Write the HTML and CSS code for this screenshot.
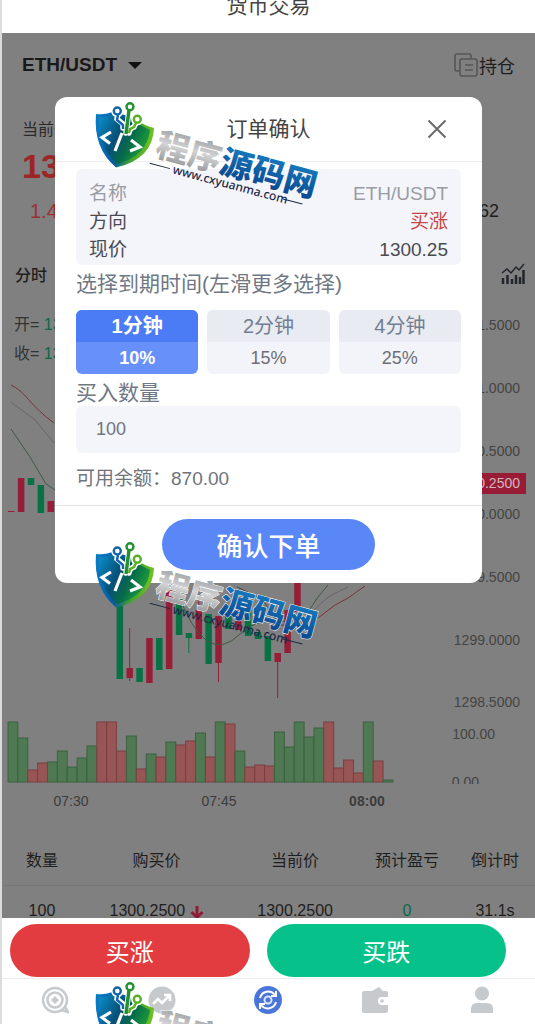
FILE: index.html
```
<!DOCTYPE html>
<html lang="zh-CN">
<head>
    <meta charset="UTF-8">
    <meta name="viewport" content="width=device-width, initial-scale=1.0">
    <title>货币交易</title>
    <link rel="stylesheet" href="styles.css">
</head>
<body>
    <div class="app">
        <header class="navbar"><h1>货币交易</h1></header>

        <main class="content">
            <div class="pair-bar">
                <button class="pair">ETH/USDT <span class="caret"></span></button>
                <a class="position" href="#">
                    <svg width="26" height="24" viewBox="0 0 26 24" fill="none" stroke="#555" stroke-width="1.6">
                        <path d="M6 18H4a2 2 0 0 1-2-2V3a2 2 0 0 1 2-2h12a2 2 0 0 1 2 2v2"/>
                        <rect x="7" y="6" width="17" height="17" rx="2"/>
                        <path d="M12 12h8M12 17h8"/>
                    </svg>持仓</a>
            </div>

            <div class="quote">
                <div class="quote-label">当前价</div>
                <div class="quote-price">1300.25</div>
                <div class="quote-row"><span class="change">1.43%</span><span>1281.62</span></div>
            </div>

            <div class="period">
                <span>分时</span>
                <svg width="24" height="22" viewBox="0 0 24 22" fill="none" stroke="#23252d">
                    <path d="M2 21v-6M6.500 21v-9M11 21v-5M15 21v-9M19 21v-7M22.500 21V7" stroke-width="2.500"/>
                    <path d="M1 10l5-4 4 4 5-6 3 3 5-6" stroke-width="1.500"/>
                </svg>
            </div>

            <svg class="chart" viewBox="2 300 533 533">
                <defs><clipPath id="volClip"><rect x="440" y="770" width="95" height="14"/></clipPath></defs>
                <g class="legend">
                    <text x="14" y="330">开= <tspan class="num">1300.1</tspan></text>
                    <text x="14" y="359">收= <tspan class="num">1300.2</tspan></text>
                </g>
                <g id="candles"></g>
                <g id="volumes"></g>
                <g class="ma">
                    <path class="ma-red" d="M11 385Q20 389 29 400T54 423M318 618L335 605L348 598L365 586"/>
                    <path class="ma-grey" d="M11 402L35 420L54 443M312 612L328 597L348 587"/>
                    <path class="ma-green" d="M11 429L30 457L46 484L55 490M308 612L318 597L328 585"/>
                    <path class="ma-green" d="M178 592Q190 628 206 640T240 634T290 622"/>
                    <path class="ma-dark" d="M237 587L262 599L280 625L300 626L310 615"/>
                </g>
                <g class="axis">
                    <text x="520" y="330">1301.5000</text>
                    <text x="520" y="393">1301.0000</text>
                    <text x="520" y="456">1300.5000</text>
                    <text x="520" y="519">1300.0000</text>
                    <text x="520" y="582">1299.5000</text>
                    <text x="520" y="645">1299.0000</text>
                    <text x="520" y="707">1298.5000</text>
                    <text x="495" y="739">100.00</text>
                    <text x="479" y="787" clip-path="url(#volClip)">0.00</text>
                </g>
                <rect class="tag" x="445" y="473" width="81" height="21"/>
                <text class="tag-text" x="520" y="488">1300.2500</text>
                <g class="times">
                    <text x="71" y="806">07:30</text>
                    <text x="219" y="806">07:45</text>
                    <text class="hour" x="367" y="806">08:00</text>
                </g>
            </svg>

            <table class="orders">
                <thead>
                    <tr><th>数量</th><th>购买价</th><th>当前价</th><th>预计盈亏</th><th>倒计时</th></tr>
                </thead>
                <tbody>
                    <tr>
                        <td>100</td>
                        <td>1300.2500 <svg class="arrow" width="14" height="14" viewBox="0 0 14 14"><path d="M7 1v11M1.500 7L7 12.500 12.500 7"/></svg></td>
                        <td>1300.2500</td>
                        <td class="profit">0</td>
                        <td>31.1s</td>
                    </tr>
                </tbody>
            </table>

            <div class="mask">
                <form class="dialog" role="dialog" aria-labelledby="dialogTitle">
                    <div class="dialog-head">
                        <h2 id="dialogTitle">订单确认</h2>
                        <button type="button" class="close" aria-label="关闭">
                            <svg width="20" height="20" viewBox="0 0 20 20"><path d="M1.500 1.500l17 17M18.500 1.500l-17 17"/></svg>
                        </button>
                    </div>
                    <div class="dialog-body">
                        <dl class="info">
                            <div class="muted"><dt>名称</dt><dd>ETH/USDT</dd></div>
                            <div><dt>方向</dt><dd class="up">买涨</dd></div>
                            <div><dt>现价</dt><dd>1300.25</dd></div>
                        </dl>
                        <div class="label">选择到期时间(左滑更多选择)</div>
                        <div class="options">
                            <button type="button" class="option active"><span>1分钟</span><span>10%</span></button>
                            <button type="button" class="option"><span>2分钟</span><span>15%</span></button>
                            <button type="button" class="option"><span>4分钟</span><span>25%</span></button>
                        </div>
                        <label class="label amount-label" for="amount">买入数量</label>
                        <input class="amount" id="amount" type="text" value="100">
                        <div class="balance">可用余额：870.00</div>
                    </div>
                    <div class="dialog-foot"><button type="button" class="submit">确认下单</button></div>
                </form>
            </div>
        </main>

        <div class="actions">
            <button class="buy-up">买涨</button>
            <button class="buy-down">买跌</button>
        </div>

        <nav class="tabbar">
            <a href="#" aria-label="首页">
                <svg width="28" height="28" viewBox="0 0 28 28" fill="none" stroke="#c6cacd" stroke-width="2.500">
                    <circle cx="14" cy="14" r="12"/><circle cx="14" cy="14" r="7.500"/>
                    <path d="M14 10l4 4-4 4-4-4z" fill="#c6cacd" stroke="none"/><path d="M19 24l8 2-3-5"/>
                </svg>
            </a>
            <a href="#" aria-label="行情">
                <svg width="28" height="28" viewBox="0 0 28 28" fill="none">
                    <circle cx="14" cy="14" r="13.500" fill="#c6cacd"/>
                    <path d="M5 18l5-5 4 4 7-7M16 9h6v6" stroke="#fff" stroke-width="2.500"/>
                </svg>
            </a>
            <a href="#" aria-label="交易">
                <svg width="28" height="28" viewBox="0 0 28 28" fill="none">
                    <circle cx="14" cy="14" r="14" fill="#4a76dc"/>
                    <path d="M6 12a8.500 8.500 0 0 1 15-3M22 16a8.500 8.500 0 0 1-15 3M22 5v5h-5M6 23v-5h5" stroke="#fff" stroke-width="2"/>
                    <circle cx="14" cy="14" r="3.500" stroke="#dce6ff" stroke-width="2"/>
                </svg>
            </a>
            <a href="#" aria-label="资产">
                <svg width="28" height="28" viewBox="0 0 28 28">
                    <path d="M1 7q0-2 2-2h8l7-4 4 4h3q2 0 2 2v4h-6a4 4 0 0 0 0 8h6v6q0 2-2 2H3q-2 0-2-2z" fill="#c6cacd"/>
                    <circle cx="21" cy="15" r="1.800" fill="#c6cacd"/>
                </svg>
            </a>
            <a href="#" aria-label="我的">
                <svg width="28" height="28" viewBox="0 0 28 28" fill="#c6cacd">
                    <circle cx="14" cy="7.500" r="7"/><path d="M3 27v-4q0-6 6-6h10q6 0 6 6v4z"/>
                </svg>
            </a>
        </nav>

        <svg class="watermark first" viewBox="0 0 235 112">
            <defs>
                <linearGradient id="edge" x1="0" y1=".4" x2="1" y2=".6"><stop offset="0" stop-color="#0878c0"/><stop offset=".4" stop-color="#0758a5"/><stop offset=".65" stop-color="#3aa02f"/><stop offset="1" stop-color="#7cc522"/></linearGradient>
                <linearGradient id="face" x1="0" y1="0" x2="1" y2=".5"><stop offset="0" stop-color="#0890cc"/><stop offset=".45" stop-color="#075078"/><stop offset=".7" stop-color="#066a4a"/><stop offset="1" stop-color="#1d9e38"/></linearGradient>
                <linearGradient id="silver" x1="0" y1="0" x2="0" y2="1"><stop offset="0" stop-color="#858789"/><stop offset=".5" stop-color="#d2d3d4"/><stop offset="1" stop-color="#858789"/></linearGradient>
                <linearGradient id="blue" x1="0" y1="0" x2="0" y2="1"><stop offset="0" stop-color="#1a87c9"/><stop offset="1" stop-color="#083e87"/></linearGradient>
                <symbol id="brand" viewBox="0 0 235 112">
                    <path d="M6 16Q16 17 24 13L47 22Q55 28 64 30Q63 61 26 69.500Q3 50 6 16z" fill="url(#edge)"/>
                    <path d="M9 19Q17 20 25 16L47 25Q53 29 60 32Q57 58 27 66Q7 48 9 19z" fill="url(#face)"/>
                    <g fill="none" stroke="#fff" stroke-width="5.500" stroke-linecap="round">
                        <path d="M28 16l-1 5 6 5v4M39 13l-3 22M46 25l-2 4-4 2-1 4"/>
                        <circle cx="27.300" cy="13" r="3.500"/><circle cx="40" cy="8.700" r="3.500"/><circle cx="47.300" cy="21.300" r="3.500"/>
                    </g>
                    <g fill="none" stroke-width="2.400">
                        <path d="M28 17l-1 5 6 5v4" stroke="#1165ac"/><circle cx="27.300" cy="13" r="3.500" stroke="#1165ac"/>
                        <path d="M39 12l-3 24" stroke="#22922f" stroke-width="3.500"/><circle cx="40" cy="8.700" r="3.500" stroke="#22922f"/>
                        <path d="M46 25l-2 4-4 2-1 4" stroke="#58ae25"/><circle cx="47.300" cy="21.300" r="3.500" stroke="#58ae25"/>
                    </g>
                    <path d="M21 34l-9 5.500 8 6M32 35l-7 18M41 42l9 7-10 4" fill="none" stroke="#fff" stroke-width="3.200"/>
                    <g transform="translate(64 57) rotate(15)">
                        <text class="brand-name" x="0" y="0" fill="url(#silver)">程序</text>
                        <text class="brand-name" x="66" y="0" fill="url(#blue)">源码网</text>
                        <text class="brand-url" x="22" y="13">www.cxyuanma.com</text>
                        <path d="M-2 9h21M136 9h20" stroke="#1d2947" stroke-width="1"/>
                    </g>
                </symbol>
            </defs>
            <use href="#brand"/>
        </svg>
        <svg class="watermark second" viewBox="0 0 235 112"><use href="#brand"/></svg>
        <svg class="watermark third" viewBox="0 0 235 112"><use href="#brand"/></svg>
    </div>

    <script>
        const NS = 'http://www.w3.org/2000/svg';
        const START = 8;
        const STEP = 9.87;
        const BASE = 782;

        // slot, body top, body bottom, wick top, wick bottom, color
        const candles = [
            [0, 511, 512, 511, 512, 'r'], [1, 478, 512, 478, 512, 'r'], [2, 478, 485, 478, 485, 'g'],
            [3, 485, 513, 485, 513, 'g'], [4, 501, 512, 501, 512, 'r'], [11, 590, 679, 590, 679, 'g'],
            [12, 668, 678, 628, 681, 'r'], [13, 668, 682, 668, 682, 'g'], [14, 638, 683, 638, 683, 'r'],
            [15, 638, 670, 638, 670, 'g'], [16, 588, 669, 588, 669, 'r'], [17, 595, 635, 595, 635, 'g'],
            [18, 633, 638, 633, 653, 'g'], [19, 610, 639, 595, 639, 'r'], [20, 614, 664, 614, 664, 'g'],
            [21, 616, 663, 616, 682, 'r'], [22, 605, 629, 605, 629, 'g'], [23, 605, 630, 605, 630, 'r'],
            [24, 610, 636, 610, 636, 'g'], [25, 632, 639, 632, 639, 'g'], [26, 636, 661, 636, 661, 'g'],
            [27, 653, 662, 653, 698, 'r'], [28, 610, 653, 610, 653, 'r'], [29, 570, 612, 570, 612, 'r']
        ];
        const volumes = 'g60 g44 r12 r19 g20 g31 g15 g24 g36 r60 r60 r31 g46 r13 g28 r25 g40 r37 r41 g49 r25 g60 r58 g31 r15 r17 r16 g50 g35 g60 g45 g54 r60 r14 r22 r9 g60 r21 g2'.split(' ');

        function rect(parent, x, y, width, height, cls) {
            const el = document.createElementNS(NS, 'rect');
            Object.entries({ x, y, width, height, class: cls }).forEach(([k, v]) => el.setAttribute(k, v));
            parent.appendChild(el);
        }

        const candleLayer = document.getElementById('candles');
        candles.forEach(([slot, top, bottom, high, low, color]) => {
            const x = START + slot * STEP;
            rect(candleLayer, x, top, 6.5, bottom - top, 'candle-' + color);
            rect(candleLayer, x + 2.7, high, 1, low - high, 'candle-' + color);
        });

        const volumeLayer = document.getElementById('volumes');
        volumes.forEach((item, i) => {
            const height = Number(item.slice(1));
            rect(volumeLayer, START + i * STEP, BASE - height, STEP, height, 'volume-' + item[0]);
        });
    </script>
</body>
</html>
```
FILE: styles.css
```
* { margin: 0; padding: 0; box-sizing: border-box; }
body { font-family: "Liberation Sans", "Noto Sans CJK SC", sans-serif; font-size: 16px; color: #1e1e1e; background: #fff; }
button, input { font: inherit; color: inherit; border: none; background: none; }
button { cursor: pointer; }
a { color: inherit; text-decoration: none; }
svg { display: block; }

.app { position: relative; display: flex; flex-direction: column; height: 100vh; overflow: hidden; border-left: 2px solid #dcdcdc; }
.navbar { display: flex; justify-content: center; align-items: flex-end; height: 33px; padding-bottom: 14px; overflow: hidden; flex-shrink: 0; }
.navbar h1 { font-size: 21px; line-height: 26px; font-weight: 400; color: #444; }

.content { position: relative; flex: 1; min-height: 0; overflow: hidden; background: #808080; }
.pair-bar { display: flex; justify-content: space-between; align-items: center; height: 64px; padding: 0 20px; }
.pair { display: flex; align-items: center; gap: 11px; font-size: 19px; font-weight: 700; color: #191919; }
.caret { border: 7px solid transparent; border-top-color: #111; border-bottom: none; }
.position { display: flex; align-items: center; font-size: 18px; }
.quote { padding: 21px 20px 16px; }
.quote-label { line-height: 24px; color: #2b2b2b; }
.quote-price { font-size: 34px; font-weight: 700; line-height: 48px; color: #9c2626; }
.quote-row { display: flex; justify-content: space-between; padding: 0 16px 0 8px; font-size: 18px; line-height: 42px; }
.change { font-size: 20px; color: #9c3030; }
.period { display: flex; justify-content: space-between; align-items: center; height: 52px; padding: 0 10px 0 13px; font-weight: 500; }

.chart { width: 100%; height: auto; font-size: 14px; }
.legend { font-size: 16px; fill: #333; }
.legend .num { fill: #0a6a44; }
.axis { fill: #444; text-anchor: end; }
.times { fill: #3c3c3c; text-anchor: middle; }
.times .hour { font-weight: 700; }
.tag { fill: #991c36; }
.tag-text { fill: #d3b5ba; text-anchor: end; }
.candle-r { fill: #951f38; }
.candle-g { fill: #087245; }
.volume-r { fill: #985556; stroke: #7b3f41; }
.volume-g { fill: #4e7952; stroke: #3d6141; }
.ma path { fill: none; stroke-width: 1; }
.ma .ma-red { stroke: #7b3338; }
.ma .ma-grey { stroke: #686468; }
.ma .ma-green { stroke: #3f5a41; }
.ma .ma-dark { stroke: #4b4245; }

.orders { width: 100%; table-layout: fixed; border-collapse: collapse; text-align: center; }
.orders th { height: 52px; font-weight: 400; border-bottom: 1px solid #777; }
.orders td { height: 52px; white-space: nowrap; }
.orders th:nth-child(1) { width: 15%; }
.orders th:nth-child(2) { width: 28%; }
.orders th:nth-child(3) { width: 24%; }
.orders th:nth-child(4) { width: 18%; }
.orders .profit { color: #0b694b; }
.arrow { display: inline-block; vertical-align: -3px; fill: none; stroke: #901b36; stroke-width: 3; }

.mask { position: absolute; inset: 0; padding: 64px 53px; }
.dialog { background: #fff; border-radius: 12px; color: #4b4b4f; font-size: 19px; }
.dialog-head { position: relative; border-bottom: 1px solid #eeeeef; }
.dialog-head h2 { font-size: 21px; font-weight: 400; line-height: 64px; text-align: center; color: #444; }
.close { position: absolute; top: 22px; right: 35px; }
.close path { stroke: #6b6b6b; stroke-width: 2; }
.dialog-body { padding: 7px 21px 0; }
.info { padding: 11px 13px 1px; border-radius: 6px; background: #f4f5fb; line-height: 28px; }
.info div { display: flex; justify-content: space-between; }
.info .muted { color: #9a9ca3; }
.info .up { color: #c94444; }
.label { display: block; height: 45px; font-size: 21px; line-height: 38px; color: #6f7884; }
.options { display: grid; grid-template-columns: repeat(3, 1fr); gap: 9px; }
.option { display: flex; flex-direction: column; border-radius: 6px; overflow: hidden; background: #f3f4fa; font-size: 18px; line-height: 32px; color: #6d6f76; }
.option span { width: 100%; }
.option span:first-child { background: #e9ebf2; font-size: 20px; color: #737e90; }
.option.active { background: #6790fb; color: #fff; font-weight: 700; }
.option.active span:first-child { background: #4c7cf5; color: #fff; }
.amount-label { height: 32px; }
.amount { display: block; width: 100%; height: 47px; padding: 0 20px; border-radius: 6px; background: #f4f4fb; font-size: 18px; color: #73757c; }
.balance { line-height: 52px; color: #6f747c; }
.dialog-foot { padding: 13px; border-top: 1px solid #e4e4e6; text-align: center; }
.submit { width: 53%; height: 51px; border-radius: 26px; background: #5a87f7; font-size: 26px; font-weight: 500; color: #fff; }

.actions { display: grid; grid-template-columns: 1fr 1fr; gap: 17px; padding: 6px 29px 1px 8px; flex-shrink: 0; }
.actions button { height: 53px; border-radius: 27px; font-size: 24px; color: #fff; }
.buy-up { background: #e23c40; }
.buy-down { background: #06c28a; }
.tabbar { display: flex; align-items: center; height: 46px; padding-bottom: 4px; border-top: 1px solid #ececec; flex-shrink: 0; }
.tabbar a { flex: 1; display: flex; justify-content: center; }

.watermark { position: absolute; left: 88px; width: 235px; height: 112px; pointer-events: none; }
.first { top: 98px; }
.second { top: 538px; }
.third { top: 978px; }
.brand-name { font-family: "Noto Sans CJK SC", sans-serif; font-size: 33px; font-weight: 900; stroke: #fff; stroke-width: 1; paint-order: stroke; }
.brand-url { font-family: "Noto Sans", sans-serif; font-size: 12px; font-weight: 500; fill: #1d2947; }
```
